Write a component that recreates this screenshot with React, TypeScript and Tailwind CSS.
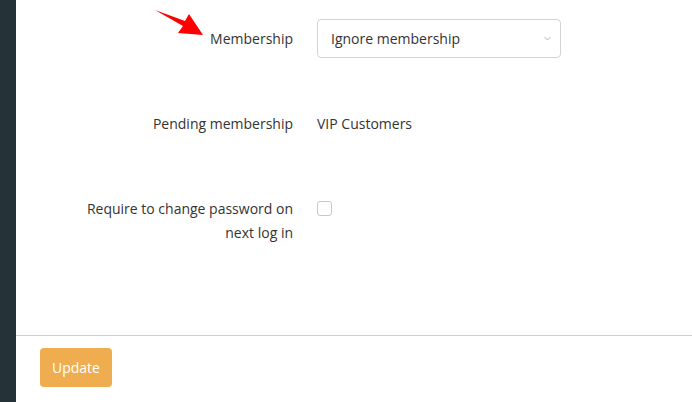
import { useState } from "react";

function FieldRow({
  label,
  children,
}: {
  label: string;
  children: React.ReactNode;
}) {
  return (
    <div className="grid grid-cols-[277px_1fr] gap-x-6 min-h-[39px]">
      <label className="pl-[57px] pt-2 text-right leading-6">{label}</label>
      <div className="min-w-0">{children}</div>
    </div>
  );
}

export default function App() {
  const [requireChange, setRequireChange] = useState(false);

  return (
    <div
      className="relative flex h-[402px] w-[692px] overflow-hidden bg-white text-[14px] text-[#333]"
      style={{ fontFamily: '"Open Sans", "Liberation Sans", sans-serif' }}
    >
      <aside className="w-4 shrink-0 bg-[#253238]" />

      <main className="flex flex-1 flex-col">
        <section className="flex h-[336px] flex-col gap-[46px] border-b border-[#cfcfcf] pt-[19px]">
          <FieldRow label="Membership">
            <div className="relative w-[244px]">
              <select
                defaultValue="ignore"
                className="h-[39px] w-full appearance-none rounded border border-[#d3d3d3] bg-white pl-[13px] pr-8 text-[14px] text-[#333] outline-none"
              >
                <option value="ignore">Ignore membership</option>
                <option value="vip">VIP Customers</option>
              </select>
              <svg
                className="pointer-events-none absolute right-[10px] top-[17px]"
                width="7"
                height="5"
                viewBox="0 0 7 5"
                fill="none"
                stroke="#b5b5b5"
                strokeWidth="1"
              >
                <path d="M0.5 1l3 3 3-3" />
              </svg>
            </div>
          </FieldRow>

          <FieldRow label="Pending membership">
            <div className="pt-2 leading-6">VIP Customers</div>
          </FieldRow>

          <FieldRow label="Require to change password on next log in">
            <div className="pt-3">
              <button
                type="button"
                onClick={() => setRequireChange(!requireChange)}
                className="block h-[15px] w-[15px] rounded-[3px] border border-[#c8c8c8] bg-white"
              >
                {requireChange && (
                  <svg width="13" height="13" viewBox="0 0 13 13" fill="none" stroke="#333" strokeWidth="1.5">
                    <path d="M3 6.5l2.5 2.5 4.5-5" />
                  </svg>
                )}
              </button>
            </div>
          </FieldRow>
        </section>

        <footer className="px-6 pt-3">
          <button
            type="button"
            className="h-[39px] rounded bg-[#efad50] px-3 text-[14px] text-white"
          >
            Update
          </button>
        </footer>
      </main>

      {/* annotation arrow */}
      <svg
        className="pointer-events-none absolute left-[150px] top-[5px]"
        width="60"
        height="35"
        viewBox="0 0 60 35"
      >
        <polygon points="5,5 35,16 39,9 53,30 28,28 33,21" fill="#ff0000" />
      </svg>
    </div>
  );
}
